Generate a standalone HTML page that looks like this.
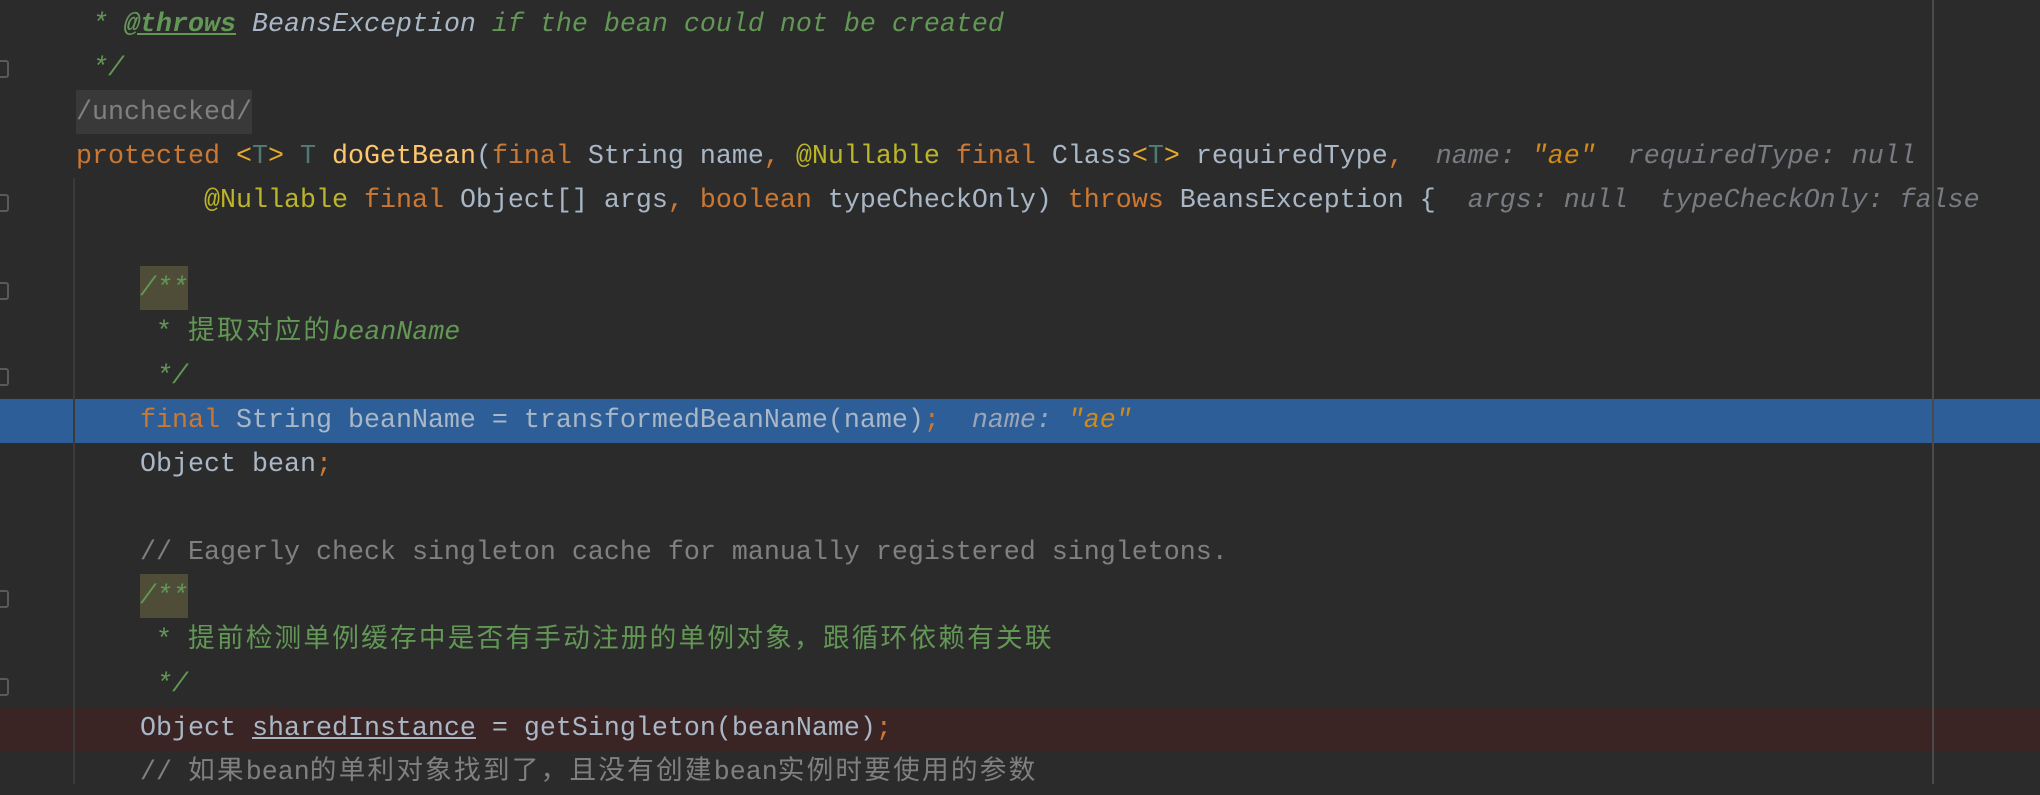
<!DOCTYPE html>
<html><head><meta charset="utf-8"><style>
html,body{margin:0;padding:0;}
body{width:2040px;height:784px;overflow:hidden;background:#2b2b2b;position:relative;font-family:"Liberation Mono","Noto Sans CJK SC",monospace;font-size:26.67px;color:#a9b7c6;}
.row{position:absolute;left:0;width:2040px;height:44px;}
.l{position:absolute;left:76px;height:44px;line-height:44px;white-space:pre;}
.k{color:#cc7832}.g{color:#629755;font-style:italic}.gn{color:#629755}.c{color:#808080}
.a{color:#bbb529}.t{color:#507874}.y{color:#e8a92a}.f{color:#ffc66d}
.h{color:#787c82;font-style:italic}.hs{color:#d08a1a;font-style:italic}
.cj{letter-spacing:2.2px}
.mk{position:absolute;left:0;width:7px;height:14px;border:2px solid #5a5a5a;border-left:none;border-radius:0 3px 3px 0;}
</style></head><body>
<div class="row" style="top:399px;background:#2d5e97"></div>
<div class="row" style="top:707px;background:#3a2424"></div>
<div style="position:absolute;left:73px;top:178px;width:2px;height:606px;background:#3a3a3a"></div>
<div style="position:absolute;left:1932px;top:0;width:2px;height:784px;background:#4a4a4a"></div>
<div style="position:absolute;left:76px;top:90px;width:176px;height:44px;background:#393939"></div>
<div style="position:absolute;left:140px;top:266px;width:48px;height:44px;background:#4f4d38"></div>
<div style="position:absolute;left:140px;top:574px;width:48px;height:44px;background:#4f4d38"></div>
<div class="mk" style="top:60px"></div><div class="mk" style="top:194px"></div>
<div class="mk" style="top:282px"></div><div class="mk" style="top:368px"></div>
<div class="mk" style="top:590px"></div><div class="mk" style="top:678px"></div>

<div class="l" style="top:3px"><span class="g"> * <u style="font-weight:bold">@throws</u> </span><span style="font-style:italic">BeansException</span><span class="g"> if the bean could not be created</span></div>
<div class="l" style="top:47px"><span class="g"> */</span></div>
<div class="l" style="top:91px"><span class="c">/unchecked/</span></div>
<div class="l" style="top:135px"><span class="k">protected </span><span class="y">&lt;</span><span class="t">T</span><span class="y">&gt;</span> <span class="t">T</span> <span class="f">doGetBean</span>(<span class="k">final </span>String name<span class="k">, </span><span class="a">@Nullable </span><span class="k">final </span>Class<span class="y">&lt;</span><span class="t">T</span><span class="y">&gt;</span> requiredType<span class="k">,</span>  <span class="h">name: </span><span class="hs">"ae"</span>  <span class="h">requiredType: null</span></div>
<div class="l" style="top:179px">        <span class="a">@Nullable </span><span class="k">final </span>Object[] args<span class="k">, boolean </span>typeCheckOnly) <span class="k">throws </span>BeansException {  <span class="h">args: null  typeCheckOnly: false</span></div>
<div class="l" style="top:267px">    <span class="g">/**</span></div>
<div class="l" style="top:311px">     <span class="gn">* <span class="cj">提取对应的</span><i>beanName</i></span></div>
<div class="l" style="top:355px">     <span class="g">*/</span></div>
<div class="l" style="top:399px">    <span class="k">final </span>String beanName = transformedBeanName(name)<span class="k">;</span>  <span class="h" style="color:#9aa6b8">name: </span><span class="hs">"ae"</span></div>
<div class="l" style="top:443px">    Object bean<span class="k">;</span></div>
<div class="l" style="top:531px">    <span class="c">// Eagerly check singleton cache for manually registered singletons.</span></div>
<div class="l" style="top:575px">    <span class="g">/**</span></div>
<div class="l" style="top:619px">     <span class="gn">* <span class="cj">提前检测单例缓存中是否有手动注册的单例对象，跟循环依赖有关联</span></span></div>
<div class="l" style="top:663px">     <span class="g">*/</span></div>
<div class="l" style="top:707px">    Object <u>sharedInstance</u> = getSingleton(beanName)<span class="k">;</span></div>
<div class="l" style="top:751px">    <span class="c">// <span class="cj">如果</span>bean<span class="cj">的单利对象找到了，且没有创建</span>bean<span class="cj">实例时要使用的参数</span></span></div>
</body></html>
